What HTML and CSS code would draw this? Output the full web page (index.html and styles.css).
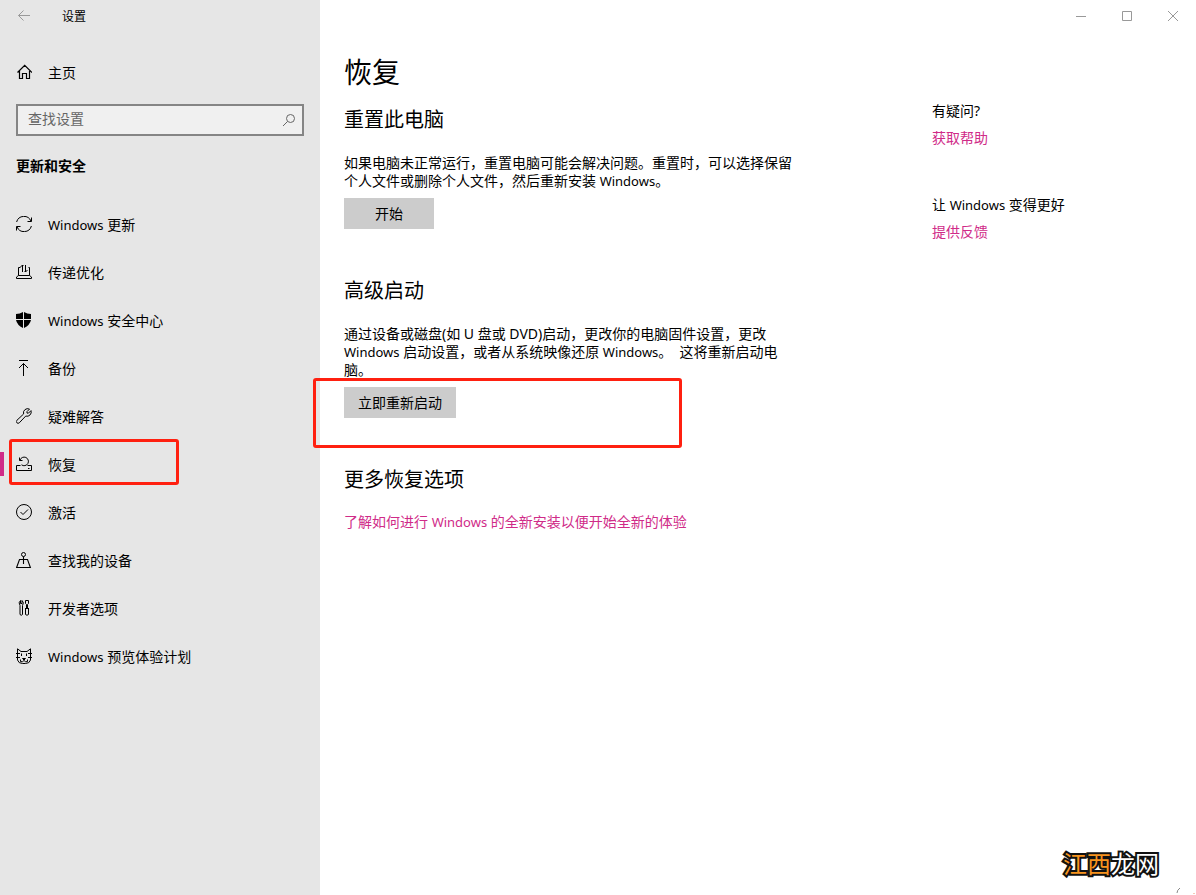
FILE: index.html
```html
<!DOCTYPE html>
<html lang="zh-CN">
<head>
<meta charset="utf-8">
<meta name="viewport" content="width=device-width, initial-scale=1">
<title>设置</title>
<link rel="stylesheet" href="styles.css">
</head>
<body>
<div class="window">
  <aside class="sidebar">
    <header class="titlebar">
      <button class="back" type="button" aria-label="返回">
        <svg width="16" height="16" viewBox="0 0 16 16"><path d="M14 7.500H2.500M7.500 2.500l-5 5 5 5"/></svg>
      </button>
      <span class="label">设置</span>
    </header>
    <a class="nav-item home" href="#">
      <svg class="icon" width="16" height="16" viewBox="0 0 16 16"><path d="M1.500 8.500L8.700 1.300L16 8.500M3.500 7v7.500h3v-5h4v5h3V7" stroke-width="1.200"/></svg>
      <span class="label">主页</span>
    </a>
    <form class="search">
      <input class="search-input" type="text" placeholder="查找设置" aria-label="查找设置">
      <button class="search-button" type="button" aria-label="搜索">
        <svg width="14" height="14" viewBox="0 0 14 14"><circle cx="8.500" cy="5.500" r="4"/><path d="M5.500 8.500L1 13"/></svg>
      </button>
    </form>
    <h2 class="group-title">更新和安全</h2>
    <nav class="nav" aria-label="更新和安全">
      <a class="nav-item" href="#">
        <svg class="icon" width="16" height="16" viewBox="0 0 16 16"><path d="M.6 6A7.600 7.600 0 0 1 15 5.200M15.500 1.500v4h-4M15.400 10A7.600 7.600 0 0 1 1 10.800M.5 14.500v-4h4"/></svg>
        <span class="label"><span class="latin">Windows</span> 更新</span>
      </a>
      <a class="nav-item" href="#">
        <svg class="icon" width="16" height="16" viewBox="0 0 16 16"><path d="M4.500 3.500h-2v8L.5 13v1.500h15V13l-2-1.500v-8h-1M2.500 11.500h11M6.500 8V1M4.500 3l2-2 1 1M9.500 1v7M11.500 6l-2 2-1-1"/></svg>
        <span class="label">传递优化</span>
      </a>
      <a class="nav-item" href="#">
        <svg class="icon icon-solid" width="16" height="16" viewBox="0 0 16 16"><path d="M0 2Q4 2 7 0V7H0zM8 0Q11 2 15 2V7H8zM0 8h7v8Q1 13 0 8zM8 8h7q-1 5-7 8z"/></svg>
        <span class="label"><span class="latin">Windows</span> 安全中心</span>
      </a>
      <a class="nav-item" href="#">
        <svg class="icon" width="16" height="16" viewBox="0 0 16 16"><path d="M3 .5h9M7.500 16V3.500M3 8l4.500-4.500L12 8"/></svg>
        <span class="label">备份</span>
      </a>
      <a class="nav-item" href="#">
        <svg class="icon" width="16" height="16" viewBox="0 0 16 16"><path d="M13.500 1.100L11 3.600v1.500h1.500L15 2.600a4.300 4.300 0 0 1-5.300 5.500L3.300 14.800A1.700 1.700 0 0 1 .9 12.300L7.600 6A4.200 4.200 0 0 1 13.500 1.100z"/></svg>
        <span class="label">疑难解答</span>
      </a>
      <a class="nav-item current" href="#" aria-current="page">
        <svg class="icon" width="16" height="16" viewBox="0 0 16 16"><path d="M4.500 9.500h-4v5h15v-5h-4M12 12.500h1.500M3.500 1.500v3H6.500M4 4.200A4.300 4.300 0 1 1 5.500 8.800"/></svg>
        <span class="label">恢复</span>
      </a>
      <a class="nav-item" href="#">
        <svg class="icon" width="16" height="16" viewBox="0 0 16 16"><circle cx="8" cy="8" r="7.500"/><path d="M4.500 8l2.500 2.500 5-5"/></svg>
        <span class="label">激活</span>
      </a>
      <a class="nav-item" href="#">
        <svg class="icon" width="16" height="16" viewBox="0 0 16 16"><circle cx="7.500" cy="2.500" r="2"/><path d="M7.500 4.500V12M5.500 7.500h-2L.6 15.500h13.800L11.500 7.500h-2M5.500 7.500h4" stroke-width="1.100"/></svg>
        <span class="label">查找我的设备</span>
      </a>
      <a class="nav-item" href="#">
        <svg class="icon" width="16" height="16" viewBox="0 0 16 16"><path d="M4.500.5v3h1.500v-3Q8.500 2.500 6.500 5.500v9q-1.200 1.500-2.500 0v-9Q2 2.500 4.500.5zM9.500.5h3v3l-1 1v4M10.500 8.500v-4l-1-1v-3M9 8.500h4M9.500 8.500v6q1.500 1.500 3 0v-6"/></svg>
        <span class="label">开发者选项</span>
      </a>
      <a class="nav-item" href="#">
        <svg class="icon" width="16" height="16" viewBox="0 0 16 16"><path d="M1.500 9V.8L5 3.500h6L14.500.8V9M0 5.500h4M12 5.500h4M0 9.500h4M12 9.500h4M1.500 9v3q1 3.500 5 3.500h3q4 0 5-3.500V9M5.500 5.500v2.500M10.500 5.500v2.500M6.500 10.500h3L8 12zM4.500 11.500v2q2 1 3.500-1q1.500 2 3.500 1v-2"/></svg>
        <span class="label"><span class="latin">Windows</span> 预览体验计划</span>
      </a>
    </nav>
  </aside>

  <main class="page">
    <div class="window-controls">
      <button type="button" aria-label="最小化"><svg width="12" height="12" viewBox="0 0 12 12"><path d="M1 6.500h10"/></svg></button>
      <button type="button" aria-label="最大化"><svg width="12" height="12" viewBox="0 0 12 12"><path d="M1.500 1.500h9v9h-9z"/></svg></button>
      <button type="button" aria-label="关闭"><svg width="12" height="12" viewBox="0 0 12 12"><path d="M1 1l10 10M11 1L1 11"/></svg></button>
    </div>
    <div class="columns">
      <div class="content">
        <h1>恢复</h1>
        <section class="block reset">
          <h2>重置此电脑</h2>
          <p>如果电脑未正常运行，重置电脑可能会解决问题。重置时，可以选择保留个人文件或删除个人文件，然后重新安装 <span class="latin">Windows</span>。</p>
          <button class="action" type="button">开始</button>
        </section>
        <section class="block startup">
          <h2>高级启动</h2>
          <p>通过设备或磁盘(如 U 盘或 DVD)启动，更改你的电脑固件设置，更改 <span class="latin">Windows</span> 启动设置，或者从系统映像还原 <span class="latin">Windows</span>。 &nbsp;这将重新启动电脑。</p>
          <div class="marked"><button class="action" type="button">立即重新启动</button></div>
        </section>
        <section class="block more">
          <h2>更多恢复选项</h2>
          <a class="link" href="#">了解如何进行 <span class="latin">Windows</span> 的全新安装以便开始全新的体验</a>
        </section>
      </div>
      <aside class="help">
        <section>
          <h3>有疑问?</h3>
          <a class="link" href="#">获取帮助</a>
        </section>
        <section>
          <h3>让 <span class="latin">Windows</span> 变得更好</h3>
          <a class="link" href="#">提供反馈</a>
        </section>
      </aside>
    </div>
    <div class="watermark"><span class="warm">江西</span>龙网</div>
    <svg class="corner" width="20" height="8" viewBox="0 0 20 8" aria-hidden="true"><path d="M1 6Q1 3 4 1" stroke="#888"/><path d="M17 6.500h2" stroke="#f6c9b8"/></svg>
  </main>
</div>
</body>
</html>
```
FILE: styles.css
```css
* {
  box-sizing: border-box;
}

body {
  margin: 0;
  color: #000;
  background: #fff;
  font: 14px/18px "Noto Sans", "Noto Sans CJK SC", sans-serif;
}

h1,
h2,
h3,
p {
  margin: 0;
  font-weight: 400;
}

button,
input {
  font: inherit;
  color: inherit;
}

button {
  padding: 0;
  border: 0;
  background: none;
}

a {
  color: inherit;
  text-decoration: none;
}

svg {
  display: block;
  fill: none;
  stroke: currentColor;
}

.latin {
  font-size: 13px;
  line-height: 1;
}

.window {
  display: grid;
  grid-template-columns: 320px 1fr;
  min-height: 100vh;
}

/* Sidebar */

.sidebar {
  background: #e6e6e6;
}

.titlebar {
  display: flex;
  align-items: center;
  gap: 30px;
  height: 32px;
  padding-left: 16px;
  font-size: 12px;
}

.back {
  color: #999;
}

.nav-item {
  position: relative;
  display: flex;
  align-items: center;
  gap: 16px;
  height: 48px;
  padding: 0 16px;
}

.label {
  padding-top: 2px;
}

.icon {
  flex: none;
}

.icon-solid {
  fill: currentColor;
  stroke: none;
}

.home {
  margin-top: 16px;
}

.search {
  display: flex;
  align-items: center;
  height: 32px;
  margin: 8px 16px 0;
  padding-right: 6px;
  border: 2px solid #858585;
  background: #f0f0f0;
  color: #666;
}

.search-input {
  flex: 1;
  min-width: 0;
  padding: 0 10px 2px;
  border: 0;
  outline: 0;
  background: none;
}

.search-input::placeholder {
  color: #666;
  opacity: 1;
}

.group-title {
  margin: 21px 16px 25px;
  font-size: 14px;
  font-weight: 700;
}

.current::before {
  content: "";
  position: absolute;
  left: 0;
  top: 12px;
  width: 4px;
  height: 24px;
  background: #d02b88;
}

.current::after {
  content: "";
  position: absolute;
  left: 9px;
  top: -1px;
  box-sizing: border-box;
  width: 170px;
  height: 46px;
  border: 3px solid #ff2010;
  border-radius: 3px;
}

/* Page */

.page {
  position: relative;
}

.window-controls {
  display: flex;
  justify-content: flex-end;
  height: 32px;
  color: #999;
}

.window-controls button {
  display: grid;
  place-items: center;
  width: 46px;
}

.columns {
  display: grid;
  grid-template-columns: 452px 1fr;
  gap: 136px;
  padding: 20px 24px;
}

h1 {
  font-size: 28px;
  line-height: 40px;
}

.block h2 {
  font-size: 20px;
  line-height: 28px;
}

.block p {
  margin-top: 20px;
}

.reset {
  margin-top: 14px;
}

.startup {
  margin-top: 48px;
}

.more {
  margin-top: 48px;
}

.more .link {
  display: block;
  margin-top: 19px;
}

.action {
  min-width: 90px;
  height: 31px;
  margin-top: 8px;
  padding: 0 14px;
  background: #ccc;
}

.marked {
  position: relative;
}

.marked::after {
  content: "";
  position: absolute;
  left: -31px;
  top: -1px;
  box-sizing: border-box;
  width: 369px;
  height: 70px;
  border: 3px solid #ff2010;
  border-radius: 3px;
  pointer-events: none;
}

.link {
  color: #d02b88;
}

.help {
  display: grid;
  align-content: start;
  gap: 49px;
  padding-top: 50px;
}

h3 {
  margin-bottom: 9px;
  font-size: 14px;
}

.watermark {
  position: absolute;
  right: 37px;
  bottom: 16px;
  color: #fff;
  font-size: 24px;
  font-weight: 400;
  line-height: 30px;
  -webkit-text-stroke: 4px #111;
  paint-order: stroke fill;
}

.warm {
  color: #f7931e;
}

.corner {
  position: absolute;
  right: 0;
  bottom: 0;
}
```
